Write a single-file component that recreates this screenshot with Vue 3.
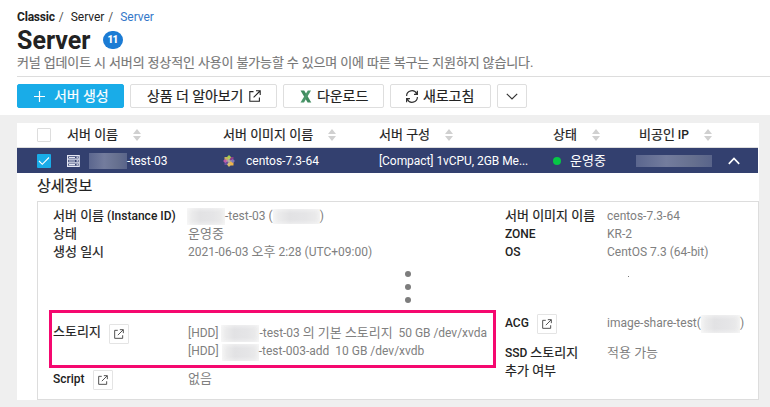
<script setup>
import { h } from 'vue'

const columns = [
  { label: '서버 이름', cls: 'c-name' },
  { label: '서버 이미지 이름', cls: 'c-image' },
  { label: '서버 구성', cls: 'c-spec' },
  { label: '상태', cls: 'c-state' },
  { label: '비공인', latin: ' IP', cls: 'c-ip' },
]

const ExternalIcon = (props) =>
  h('svg', { viewBox: '0 0 12 12', width: props.size, height: props.size, fill: 'none', stroke: 'currentColor', 'stroke-width': 1.1 }, [
    h('path', { d: 'M4.5 1.6H.8V11.2H10.4V7.5M7 .8H11.2V5M11 1L4.6 7.4' }),
  ])
ExternalIcon.props = ['size']
</script>

<template>
  <div class="page">
    <header class="top">
      <nav class="crumbs"><b>Classic</b><i>/</i><span>Server</span><i>/</i><a>Server</a></nav>
      <div class="title-row">
        <h1>Server</h1>
        <span class="count">11</span>
      </div>
      <p class="notice">커널 업데이트 시 서버의 정상적인 사용이 불가능할 수 있으며 이에 따른 복구는 지원하지 않습니다.</p>
      <div class="toolbar">
        <button class="btn primary">
          <svg width="11" height="11" viewBox="0 0 11 11" fill="none" stroke="#fff" stroke-width="1.2"><path d="M5.5 0V11M0 5.5H11" /></svg>
          <span>서버 생성</span>
        </button>
        <button class="btn more"><span>상품 더 알아보기</span><ExternalIcon size="12" /></button>
        <button class="btn download">
          <svg width="12" height="13" viewBox="0 0 12 13" fill="none"><path d="M0.5 .5H4.2L11.3 12.5H7.6Z" fill="#3f8a5e" /><path d="M7.8 .5H11L4 12.5H.5Z" fill="#4b966a" /></svg>
          <span>다운로드</span>
        </button>
        <button class="btn refresh">
          <svg width="14" height="13" viewBox="0 0 14 13" fill="none" stroke="#333" stroke-width="1.2"><path d="M1.6 6A5.3 5.3 0 0 1 11.8 4M12.4 .8V4.3H9M12.4 7A5.3 5.3 0 0 1 2.2 9M1.6 12.2V8.7H5" /></svg>
          <span>새로고침</span>
        </button>
        <button class="btn caret">
          <svg width="12" height="7" viewBox="0 0 12 7" fill="none" stroke="#333" stroke-width="1.2"><path d="M.8 .8L6 6L11.2 .8" /></svg>
        </button>
      </div>
    </header>

    <main class="body">
      <section class="card">
        <div class="grid head">
          <span class="check"></span>
          <div v-for="c in columns" :key="c.cls" class="th" :class="c.cls">
            <span class="text"><span class="ko">{{ c.label }}</span>{{ c.latin }}</span>
            <svg width="8" height="12" viewBox="0 0 8 12" fill="#d0d0d0"><path d="M4 0L8 5H0ZM0 7H8L4 12Z" /></svg>
          </div>
        </div>
        <div class="grid row">
          <span class="check on">
            <svg width="14" height="14" viewBox="0 0 14 14" fill="none" stroke="#fff" stroke-width="1.1"><path d="M2 7L5.3 10.3L12 3.5" /></svg>
          </span>
          <div class="td name">
            <svg width="13" height="12" viewBox="0 0 13 12" fill="none" stroke="#e4e6f3" stroke-width="1.2"><path d="M.6 .7H12.2V11.3H.6ZM.6 4.2H12.2M.6 7.8H12.2M2 2.5H8M2 6H8M2 9.6H8" /><path d="M10.2 1.5V3.2M10.2 5V6.8M10.2 8.7V10.4" /></svg>
            <span class="mask dark m-name"></span><span>-test-03</span>
          </div>
          <div class="td image">
            <svg width="12" height="12" viewBox="0 0 12 12">
              <path d="M1.5 2H5.5V5.5H1.5Z" fill="#c8ae62" /><path d="M6.5 2H10.5V5.5H6.5Z" fill="#8d3f8b" />
              <path d="M1.5 6.5H5.5V10H1.5Z" fill="#6a4f9a" /><path d="M6.5 6.5H10.5V10.5H6.5Z" fill="#efb44a" />
              <path d="M6 0L8.2 2.3L6 4.8L3.8 2.3Z" fill="#a9cf4b" /><path d="M12 6L9.7 8L7.4 6L9.7 4Z" fill="#7f76b8" />
              <path d="M6 12L8 9.6L6 7.3L4 9.6Z" fill="#d8c06e" /><path d="M0 6L2.3 4L4.6 6L2.3 8Z" fill="#c05aa8" />
              <path d="M6 3.5V8.5M3.5 6H8.5" stroke="#e8e1c5" stroke-width=".8" />
            </svg>
            <span>centos-7.3-64</span>
          </div>
          <div class="td spec">[Compact] 1vCPU, 2GB Me...</div>
          <div class="td state"><i></i><span>운영중</span></div>
          <div class="td"><span class="mask dark m-ip"></span></div>
          <svg class="up" width="12" height="8" viewBox="0 0 12 8" fill="none" stroke="#fff" stroke-width="1.7"><path d="M.8 6.8L6 1.5L11.2 6.8" /></svg>
        </div>

        <h2>상세정보</h2>
        <div class="panel">
          <div class="left">
            <dl>
              <dt><span class="ko">서버 이름</span> (Instance ID)</dt><dd><span class="mask m-inst"></span>-test-03 (<span class="mask m-id"></span>)</dd>
              <dt><span class="ko">상태</span></dt><dd><span class="kv">운영중</span></dd>
              <dt><span class="ko">생성 일시</span></dt><dd>2021-06-03 <span class="kv">오후</span> 2:28 (UTC+09:00)</dd>
            </dl>
            <div class="dots"><i></i><i></i><i></i></div>
            <div class="storage">
              <div class="label"><b class="ko">스토리지</b><span class="open"><ExternalIcon size="10" /></span></div>
              <div class="disks">
                <div class="first">[HDD] <span class="mask m-d1"></span>-test-03 <span class="kv">의 기본 스토리지</span>&nbsp; 50 GB /dev/xvda</div>
                <div>[HDD] <span class="mask m-d2"></span>-test-003-add&nbsp; 10 GB /dev/xvdb</div>
              </div>
            </div>
            <div class="script">
              <div class="label"><b>Script</b><span class="open"><ExternalIcon size="10" /></span></div>
              <span class="kv">없음</span>
            </div>
          </div>
          <div class="right">
            <dl>
              <dt><span class="ko">서버 이미지 이름</span></dt><dd>centos-7.3-64</dd>
              <dt>ZONE</dt><dd>KR-2</dd>
              <dt>OS</dt><dd>CentOS 7.3 (64-bit)</dd>
            </dl>
            <i class="speck"></i>
            <div class="acg">
              <div class="label"><b>ACG</b><span class="open"><ExternalIcon size="10" /></span></div>
              <span>image-share-test(<span class="mask m-acg"></span>)</span>
            </div>
            <dl class="ssd"><dt>SSD <span class="ko">스토리지<br />추가 여부</span></dt><dd><span class="kv">적용 가능</span></dd></dl>
          </div>
        </div>
      </section>
    </main>
  </div>
</template>

<style>
body { margin: 0; background: #efefef; overflow: hidden; }
</style>

<style scoped>
* { box-sizing: border-box; }
.page { width: 770px; height: 407px; background: #efefef; font: 12px/18px Roboto, "Noto Sans CJK KR", sans-serif; color: #222; white-space: nowrap; overflow: hidden; }
svg { display: block; flex: none; }
i { font-style: normal; }
.ko { font-size: 13px; line-height: 1; font-weight: 400; -webkit-text-stroke: .2px currentColor; }
.kv { font-size: 13px; line-height: 1; }
.top { height: 115px; background: #fff; padding: 8px 0 0 17px; }
.crumbs { display: flex; height: 17px; line-height: 18px; }
.crumbs b { font-weight: 700; letter-spacing: -.2px; }
.crumbs span, .crumbs a { letter-spacing: -.05px; }
.crumbs a { color: #3578c9; }
.crumbs i { margin: 0 7px 0 4px; color: #555; }
.title-row { display: flex; align-items: center; height: 29px; }
h1 { margin: 0; width: 86px; padding-top: 1px; font-size: 25px; line-height: 29px; font-weight: 700; }
.count { width: 20px; height: 18px; margin-top: 1px; border-radius: 9px; background: #1b7bd4; color: #fff; font-size: 10px; line-height: 18px; font-weight: 900; letter-spacing: -.8px; text-indent: -1px; text-align: center; }
.notice { margin: 0; height: 23px; line-height: 17px; font-size: 13px; letter-spacing: -.14px; color: #777; -webkit-text-stroke: .15px #777; border-bottom: 1px solid #ddd; }
.toolbar { display: flex; gap: 6px; padding-top: 7px; }
.btn { display: flex; align-items: center; height: 24px; padding: 0; border: 1px solid #dedede; border-radius: 2px; background: #fff; color: #222; font: 400 14px/22px Roboto, "Noto Sans CJK KR", sans-serif; letter-spacing: -.08px; -webkit-text-stroke: .2px currentColor; }
.btn span { padding-bottom: 1px; }
.primary { width: 107px; padding-left: 16px; gap: 9px; border-color: #19ace8; background: #19ace8; color: #fff; }
.more { width: 147px; padding-left: 16px; gap: 6px; }
.download { width: 101px; padding-left: 16px; gap: 5px; }
.refresh { width: 101px; padding-left: 14px; gap: 4px; }
.caret { width: 30px; justify-content: center; }
.body { padding: 8px 0 0 17px; }
.card { width: 742px; height: 277px; background: #fff; }
.grid { display: grid; grid-template-columns: 30px 156px 156px 174px 86px 89px 20px; align-items: center; width: 741px; padding-left: 20px; }
.head { height: 25px; border-bottom: 1px solid #ddd; font-size: 12px; font-weight: 500; }
.check { width: 14px; height: 14px; border: 1px solid #ddd; border-radius: 1px; background: #fff; }
.check.on { border: 0; background: #19ace8; }
.th { display: flex; align-items: center; }
.c-name .text, .c-spec .text { width: 66px; }
.c-image .text { width: 105px; }
.c-state .text { width: 39px; }
.c-ip .text { width: 65px; }
.row { height: 25px; background: #33406f; color: #fff; }
.td { display: flex; align-items: center; }
.name .m-name { margin-left: 9px; }
.image span { margin-left: 11px; }
.spec { letter-spacing: -.06px; }
.state i { width: 8px; height: 8px; margin-right: 9px; border-radius: 50%; background: #06c746; }
.state span { font-size: 13px; }
.mask { display: inline-block; flex: none; vertical-align: middle; background: linear-gradient(90deg, #f0f0f0, #e2e2e4 35%, #e5e5e7 70%, #ececec); box-shadow: inset 0 0 5px #fafafa; }
.mask.dark { background: linear-gradient(90deg, #5b668e, #737c9d 40%, #66708f 75%, #59648a); box-shadow: none; }
.m-name { width: 38px; height: 16px; }
.m-ip { width: 76px; height: 12px; margin-left: -3px; }
h2 { margin: 0; padding: 3px 0 0 20px; height: 28px; font-size: 15px; line-height: 21px; font-weight: 400; -webkit-text-stroke: .2px #222; }
.panel { display: grid; grid-template-columns: 452px 1fr; width: 722px; height: 199px; margin-left: 20px; padding: 5px 0 0 15px; border: 1px solid #ddd; }
dl { display: grid; grid-template-columns: 135px 1fr; grid-auto-rows: 18px; margin: 0; }
dt, .label b { font-weight: 500; color: #222; }
.label b.ko { font-weight: 400; line-height: 18px; }
dd { margin: 0; color: #808080; }
.m-inst { width: 38px; height: 17px; margin-left: -1px; }
.m-id { width: 47px; height: 15px; }
.dots { display: flex; flex-direction: column; gap: 7px; width: 6px; margin: 10px 0 0 352px; }
.dots i { width: 6px; height: 6px; border-radius: 50%; background: #7d7d7d; }
.storage { display: grid; grid-template-columns: 135px 1fr; width: 447px; height: 58px; margin: 7px 0 0 -4px; padding: 10px 0 0 1px; border: 3px solid #f5086f; color: #808080; }
.disks { padding-top: 1px; }
.first { letter-spacing: -.03px; }
.label { display: flex; }
.storage .open { margin: 1px 0 0 8px; }
.open { display: flex; align-items: center; justify-content: center; width: 20px; height: 20px; border: 1px solid #e4e4e4; border-radius: 1px; color: #444; }
.m-d1 { width: 38px; height: 17px; }
.m-d2 { width: 37px; height: 17px; }
.script { display: grid; grid-template-columns: 135px 1fr; margin-top: 2px; color: #808080; }
.script .kv { line-height: 18px; }
.script .open { margin-left: 8px; }
.right dl { grid-template-columns: 102px 1fr; }
.speck { display: block; width: 1px; height: 1px; margin: 15px 0 0 123px; background: #777; }
.acg { display: grid; grid-template-columns: 102px 1fr; margin-top: 37px; color: #808080; }
.acg .open { margin-left: 8px; }
.m-acg { width: 39px; height: 18px; }
.right .ssd { margin-top: 10px; }
</style>
